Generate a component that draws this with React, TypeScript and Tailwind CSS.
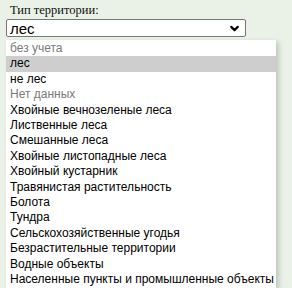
import { ChevronDown } from "lucide-react";

const options = [
  { label: "без учета", muted: true },
  { label: "лес", selected: true },
  { label: "не лес" },
  { label: "Нет данных", muted: true },
  { label: "Хвойные вечнозеленые леса" },
  { label: "Лиственные леса" },
  { label: "Смешанные леса" },
  { label: "Хвойные листопадные леса" },
  { label: "Хвойный кустарник" },
  { label: "Травянистая растительность" },
  { label: "Болота" },
  { label: "Тундра" },
  { label: "Сельскохозяйственные угодья" },
  { label: "Безрастительные территории" },
  { label: "Водные объекты" },
  { label: "Населенные пункты и промышленные объекты" },
];

export default function App() {
  return (
    <div className="relative h-[288px] w-[292px] overflow-hidden bg-[#eaf2e7] font-['Liberation_Serif',serif] text-[#111]">
      <div className="flex flex-col px-[6px] pt-[1px]">
        <label className="pl-[4px] text-[12.5px] leading-[18px]">Тип территории:</label>
        <div className="flex h-[18px] w-[240px] items-center justify-between rounded-[2px] border border-[#767676] bg-white pl-[3px] pr-[4px] font-['Liberation_Sans',sans-serif] text-[15px] leading-none text-black">
          <span>лес</span>
          <ChevronDown size={13} strokeWidth={4} />
        </div>
        <label className="mt-[1px] pl-[4px] text-[12.5px] leading-[18px]">Вид растительности:</label>
      </div>

      {/* open option list */}
      <ul className="absolute left-[6px] top-[40px] w-[270px] bg-white pt-[1px] font-['Liberation_Sans',sans-serif] text-[12px] leading-[15.4px] shadow-[3px_2px_5px_rgba(0,0,0,0.18)]">
        {options.map((o) => (
          <li
            key={o.label}
            className={`whitespace-nowrap pl-[4px] ${o.selected ? "bg-[#cecece]" : ""} ${o.muted ? "text-[#7a7a7a]" : "text-black"}`}
          >
            {o.label}
          </li>
        ))}
      </ul>
    </div>
  );
}
